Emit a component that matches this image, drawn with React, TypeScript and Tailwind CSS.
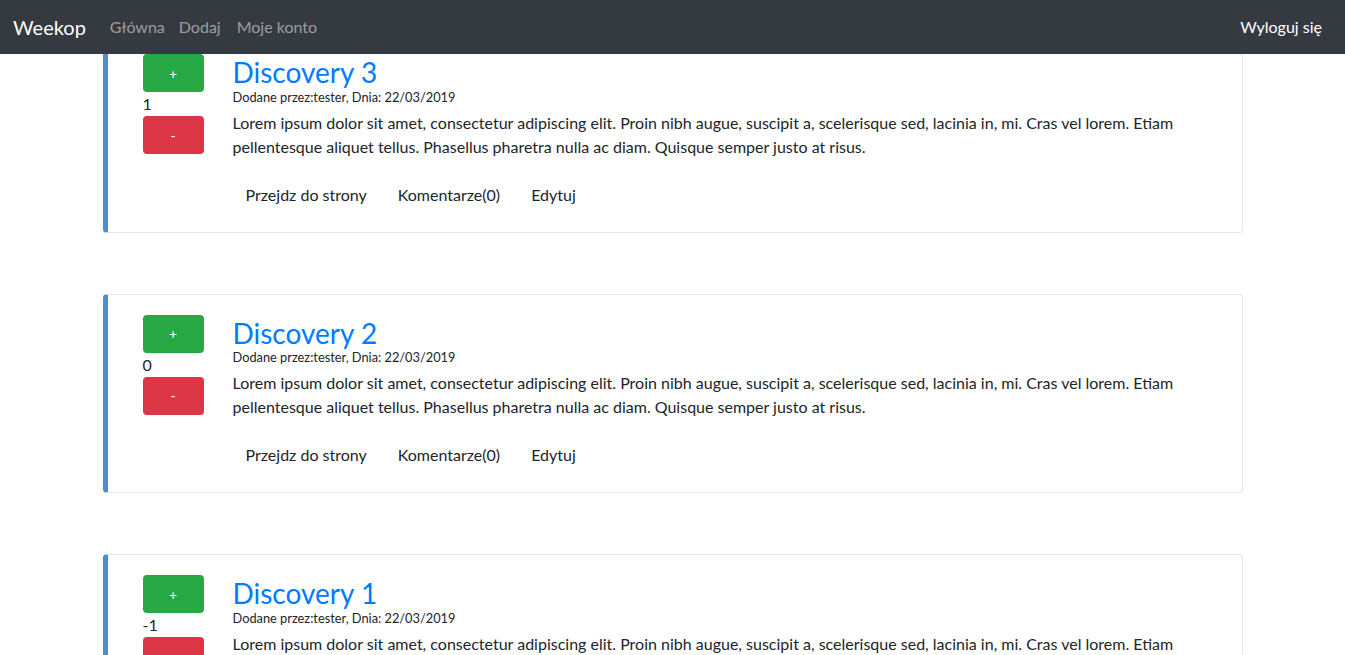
import React from "react";

type Post = { id: number; title: string; votes: number };

const posts: Post[] = [
  { id: 3, title: "Discovery 3", votes: 1 },
  { id: 2, title: "Discovery 2", votes: 0 },
  { id: 1, title: "Discovery 1", votes: -1 },
];

const lorem =
  "Lorem ipsum dolor sit amet, consectetur adipiscing elit. Proin nibh augue, suscipit a, scelerisque sed, lacinia in, mi. Cras vel lorem. Etiam pellentesque aliquet tellus. Phasellus pharetra nulla ac diam. Quisque semper justo at risus.";

function Navbar() {
  return (
    <nav className="fixed top-0 left-0 right-0 z-10 flex h-[54px] items-center justify-between bg-[#343a40] pl-[13px] pr-[23px]">
      <div className="flex items-center">
        <a className="mr-[24px] text-[20px] leading-[30px] text-white">Weekop</a>
        <div className="flex items-center gap-[14px] text-[16px] leading-[24px] text-[rgba(255,255,255,0.5)]">
          <a>Główna</a>
          <a className="mr-[2px]">Dodaj</a>
          <a>Moje konto</a>
        </div>
      </div>
      <a className="text-[16px] leading-[24px] text-white">Wyloguj się</a>
    </nav>
  );
}

function PostCard({ post }: { post: Post }) {
  return (
    <div className="flex rounded-[4px] border border-l-[5px] border-[#e6e6e6] border-l-[#4a8ecf] bg-white pt-[20px] pb-[17px] pl-[35px] pr-[35px]">
      <div className="flex w-[61px] shrink-0 flex-col">
        <button className="h-[38px] w-[61px] rounded-[4px] bg-[#28a745] text-[14px] text-white">+</button>
        <span className="text-[16px] leading-[24px] text-[#212529]">{post.votes}</span>
        <button className="h-[38px] w-[61px] rounded-[4px] bg-[#dc3545] text-[14px] text-white">-</button>
      </div>
      <div className="mt-[2px] ml-[29px] flex-1">
        <h2 className="text-[28px] leading-[1.2] text-[#007bff]">{post.title}</h2>
        <small className="block text-[12.8px] leading-[14px] text-[#212529]">
          Dodane przez:tester, Dnia: 22/03/2019
        </small>
        <p className="mt-[7px] text-[16px] leading-[24px] text-[#212529]">{lorem}</p>
        <div className="mt-[16px] ml-[13px] flex gap-[31px] text-[16px] leading-[24px] text-[#212529]">
          <a className="py-[8px]">Przejdz do strony</a>
          <a className="py-[8px]">Komentarze(0)</a>
          <a className="py-[8px]">Edytuj</a>
        </div>
      </div>
    </div>
  );
}

export default function App() {
  return (
    <div className="min-h-screen bg-white font-['Lato',sans-serif]">
      <Navbar />
      <main className="mx-auto flex w-[1140px] flex-col gap-[61px] pt-[33px] pb-[40px]">
        {posts.map((p) => (
          <PostCard key={p.id} post={p} />
        ))}
      </main>
    </div>
  );
}
